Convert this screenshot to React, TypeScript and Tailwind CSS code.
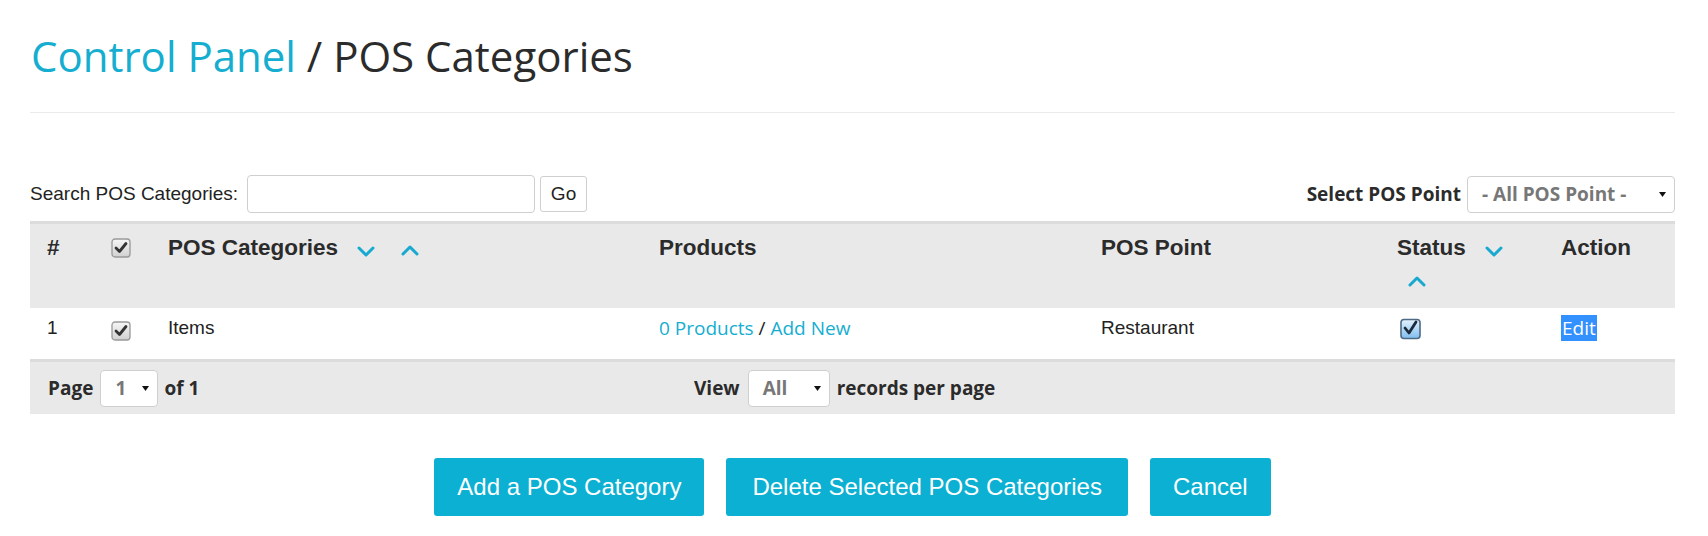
import React from "react";

const arial = "font-['Liberation_Sans',Arial,sans-serif]";
const open = "font-['Open_Sans',sans-serif]";

function ChevronDown() {
  return (
    <svg width="18" height="11" viewBox="0 0 18 11" className="inline-block">
      <polyline points="2,2 9,9 16,2" fill="none" stroke="#17a9cf" strokeWidth="3" strokeLinecap="round" strokeLinejoin="round" />
    </svg>
  );
}

function ChevronUp() {
  return (
    <svg width="18" height="11" viewBox="0 0 18 11" className="inline-block">
      <polyline points="2,9 9,2 16,9" fill="none" stroke="#17a9cf" strokeWidth="3" strokeLinecap="round" strokeLinejoin="round" />
    </svg>
  );
}

function GrayCheck() {
  return (
    <svg width="20" height="20" viewBox="0 0 20 20" className="block">
      <defs>
        <linearGradient id="gc" x1="0" y1="0" x2="0" y2="1">
          <stop offset="0" stopColor="#f6f6f6" />
          <stop offset="1" stopColor="#d0d0d0" />
        </linearGradient>
      </defs>
      <rect x="1" y="1" width="18" height="18" rx="3" fill="url(#gc)" stroke="#999" strokeWidth="1.3" />
      <path d="M5 10 L8.5 13.5 L15 5.5" fill="none" stroke="#333" strokeWidth="2.8" strokeLinecap="round" strokeLinejoin="round" />
    </svg>
  );
}

function BlueCheck() {
  return (
    <svg width="21" height="22" viewBox="0 0 21 22" className="block">
      <defs>
        <linearGradient id="bc" x1="0" y1="0" x2="0" y2="1">
          <stop offset="0" stopColor="#e4f3ff" />
          <stop offset="1" stopColor="#7fbdf0" />
        </linearGradient>
      </defs>
      <rect x="1" y="1.5" width="19" height="19" rx="3" fill="url(#bc)" stroke="#4f6a84" strokeWidth="1.6" />
      <path d="M5 10 L9 15 L16 4" fill="none" stroke="#1d2b3a" strokeWidth="2.8" strokeLinecap="round" strokeLinejoin="round" />
    </svg>
  );
}

function Caret() {
  return (
    <svg width="7" height="5" viewBox="0 0 7 5" className="block">
      <polygon points="0,0 7,0 3.5,5" fill="#111" />
    </svg>
  );
}

function SelectBox({ label, width }: { label: string; width: string }) {
  return (
    <div className={`${width} h-[37px] bg-white border border-[#cfcfcf] rounded-[4px] flex items-center justify-between pl-[14px] pr-[8px]`}>
      <span className={`${open} font-bold text-[19px] text-[#777]`}>{label}</span>
      <Caret />
    </div>
  );
}

export default function App() {
  const cols = "grid grid-cols-[65px_56px_491px_442px_296px_164px_1fr]";

  return (
    <div className="w-[1708px] h-[536px] bg-white pl-[30px] pr-[33px] text-[#2b2b2b]">
      <h1 className={`${open} pt-[27px] text-[42px] leading-[57px] pl-[1px]`}>
        <span className="text-[#15aed1]">Control Panel</span> / POS Categories
      </h1>
      <div className="mt-[28px] h-px bg-[#eaeaea]" />

      {/* search + filter */}
      <div className="mt-[62px] h-[38px] flex items-center justify-between">
        <div className="flex items-center">
          <span className={`${arial} text-[19px] text-[#222]`}>Search POS Categories:</span>
          <div className="ml-[9px] w-[288px] h-[38px] bg-white border border-[#cfcfcf] rounded-[4px]" />
          <button className={`${arial} ml-[5px] w-[47px] h-[36px] bg-white border border-[#cfcfcf] rounded-[3px] text-[19px] text-[#222]`}>
            Go
          </button>
        </div>
        <div className="flex items-center">
          <span className={`${open} font-bold text-[19px] text-[#2b2b2b]`}>Select POS Point</span>
          <div className="ml-[6px]">
            <SelectBox label="- All POS Point -" width="w-[208px]" />
          </div>
        </div>
      </div>

      {/* table */}
      <div className="mt-[8px]">
        <div className={`${cols} ${arial} border-t-[3px] border-[#dcdcdc] bg-[#e9e9e9] h-[87px] pt-[11px] text-[22.5px] font-bold leading-[25px]`}>
          <div className="pl-[17px]">#</div>
          <div className="pl-[16px] pt-[3px]">
            <GrayCheck />
          </div>
          <div className="pl-[17px] flex items-start">
            <span>POS Categories</span>
            <span className="ml-[19px] mt-[2px]"><ChevronDown /></span>
            <span className="ml-[26px] mt-[1px]"><ChevronUp /></span>
          </div>
          <div className="pl-[17px]">Products</div>
          <div className="pl-[17px]">POS Point</div>
          <div className="pl-[17px]">
            <div className="flex items-start">
              <span>Status</span>
              <span className="ml-[19px] mt-[2px]"><ChevronDown /></span>
            </div>
            <div className="pl-[11px] mt-[7px] leading-none">
              <ChevronUp />
            </div>
          </div>
          <div className="pl-[17px]">Action</div>
        </div>

        <div className={`${cols} ${arial} h-[51px] bg-white pt-[7px] text-[19px] text-[#222] leading-[26px]`}>
          <div className="pl-[17px]">1</div>
          <div className="pl-[16px] pt-[6px]">
            <GrayCheck />
          </div>
          <div className="pl-[17px]">Items</div>
          <div className={`pl-[17px] ${open}`}>
            <span className="text-[#15aed1]">0 Products</span> / <span className="text-[#15aed1]">Add New</span>
          </div>
          <div className="pl-[17px]">Restaurant</div>
          <div className="pl-[20px] pt-[3px]">
            <BlueCheck />
          </div>
          <div className={`pl-[17px] ${open}`}>
            <span className="bg-[#3390ff] text-white px-px">Edit</span>
          </div>
        </div>

        <div className={`${open} font-bold text-[19px] text-[#2b2b2b] border-t-[3px] border-[#dcdcdc] bg-[#e9e9e9] h-[55px] flex items-center`}>
          <div className="w-[612px] pl-[18px] flex items-center">
            <span>Page</span>
            <div className="ml-[7px]">
              <SelectBox label="1" width="w-[58px]" />
            </div>
            <span className="ml-[6px]">of 1</span>
          </div>
          <div className="pl-[52px] flex items-center">
            <span>View</span>
            <div className="ml-[8px]">
              <SelectBox label="All" width="w-[82px]" />
            </div>
            <span className="ml-[7px]">records per page</span>
          </div>
        </div>
      </div>

      {/* actions */}
      <div className={`${arial} mt-[44px] flex justify-center gap-[22px] text-[24px] text-white`}>
        <button className="h-[58px] px-[23px] bg-[#0cb0d2] rounded-[3px]">Add a POS Category</button>
        <button className="h-[58px] px-[26px] bg-[#0cb0d2] rounded-[3px]">Delete Selected POS Categories</button>
        <button className="h-[58px] px-[23px] bg-[#0cb0d2] rounded-[3px]">Cancel</button>
      </div>
    </div>
  );
}
